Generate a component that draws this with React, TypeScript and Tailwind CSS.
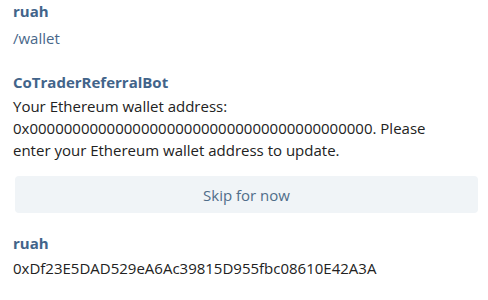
export default function App() {
  return (
    <div className="h-[300px] w-[488px] bg-white px-[13px] font-['Open_Sans',sans-serif] text-[15px] leading-[22px] text-[#222]">
      <div className="mb-[5px] font-bold text-[#42648a]">ruah</div>
      <div className="text-[#48678a]">/wallet</div>

      <div className="mt-[22px] mb-[2px] font-bold text-[#42648a]">CoTraderReferralBot</div>
      <div>
        Your Ethereum wallet address:
        <br />
        0x0000000000000000000000000000000000000000. Please
        <br />
        enter your Ethereum wallet address to update.
      </div>
      <button
        type="button"
        className="mt-[15px] ml-[2px] block h-[37px] w-[463px] rounded-[4px] bg-[#f0f4f7] text-[#4f6d89]"
      >
        Skip for now
      </button>

      <div className="mt-[19px] mb-[3px] font-bold text-[#42648a]">ruah</div>
      <div>0xDf23E5DAD529eA6Ac39815D955fbc08610E42A3A</div>
    </div>
  );
}
